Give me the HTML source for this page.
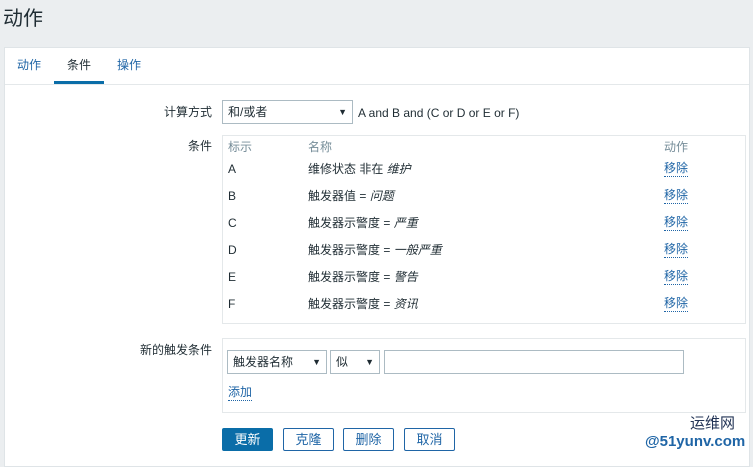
<!DOCTYPE html>
<html><head><meta charset="utf-8"><style>
*{margin:0;padding:0;box-sizing:border-box}
body{width:753px;height:459px;background:#ebeef0;font-family:"Liberation Sans","Noto Sans CJK SC",sans-serif;font-size:12px;color:#1f2c33;position:relative;overflow:hidden}
.a{position:absolute;white-space:nowrap;line-height:16px}
.panel{position:absolute;left:4px;top:47px;width:746px;height:420px;background:#fff;border:1px solid #dfe4e7}
.box{position:absolute;border:1px solid #e4e8ea;background:#fff}
.sel{position:absolute;border:1px solid #acbbc3;background:#fff;height:24px;line-height:22px;padding-left:5px}
.sel:after{content:"▼";position:absolute;right:5px;font-size:9px;top:0}
.lnk{color:#1f65a6;border-bottom:1px dotted #1f65a6;line-height:15px}
.btn{position:absolute;top:428px;height:23px;width:51px;border:1px solid #1f65a6;border-radius:2px;color:#1f65a6;text-align:center;line-height:21px;font-size:13px;background:#fff}
.lab{position:absolute;right:541px;color:#1f2c33}
</style></head><body>
<div class="a" style="left:3px;top:6px;font-size:20px;line-height:26px;color:#1f2c33">动作</div>
<div class="panel"></div>
<div class="a" style="left:17px;top:57px;color:#1f65a6">动作</div>
<div class="a" style="left:67px;top:57px;color:#1f2c33">条件</div>
<div class="a" style="left:117px;top:57px;color:#1f65a6">操作</div>
<div class="a" style="left:54px;top:81px;width:50px;height:3px;background:#0a6da8"></div>
<div class="a" style="left:5px;top:84px;width:744px;height:1px;background:#e4e8ea"></div>
<div class="a lab" style="top:104px">计算方式</div>
<div class="sel" style="left:222px;top:100px;width:131px">和/或者</div>
<div class="a" style="left:358px;top:105px">A and B and (C or D or E or F)</div>
<div class="a lab" style="top:138px">条件</div>
<div class="box" style="left:222px;top:135px;width:524px;height:189px"></div>
<div class="a" style="left:228px;top:139px;color:#768d99">标示</div>
<div class="a" style="left:308px;top:139px;color:#768d99">名称</div>
<div class="a" style="left:664px;top:139px;color:#768d99">动作</div>
<div class="a" style="left:228px;top:161px">A</div><div class="a" style="left:308px;top:161px">维修状态 非在 <i>维护</i></div><div class="a lnk" style="left:664px;top:161px">移除</div>
<div class="a" style="left:228px;top:188px">B</div><div class="a" style="left:308px;top:188px">触发器值 = <i>问题</i></div><div class="a lnk" style="left:664px;top:188px">移除</div>
<div class="a" style="left:228px;top:215px">C</div><div class="a" style="left:308px;top:215px">触发器示警度 = <i>严重</i></div><div class="a lnk" style="left:664px;top:215px">移除</div>
<div class="a" style="left:228px;top:242px">D</div><div class="a" style="left:308px;top:242px">触发器示警度 = <i>一般严重</i></div><div class="a lnk" style="left:664px;top:242px">移除</div>
<div class="a" style="left:228px;top:269px">E</div><div class="a" style="left:308px;top:269px">触发器示警度 = <i>警告</i></div><div class="a lnk" style="left:664px;top:269px">移除</div>
<div class="a" style="left:228px;top:296px">F</div><div class="a" style="left:308px;top:296px">触发器示警度 = <i>资讯</i></div><div class="a lnk" style="left:664px;top:296px">移除</div>
<div class="a lab" style="top:342px">新的触发条件</div>
<div class="box" style="left:222px;top:338px;width:524px;height:75px"></div>
<div class="sel" style="left:227px;top:350px;width:100px">触发器名称</div>
<div class="sel" style="left:330px;top:350px;width:50px">似</div>
<div class="a" style="left:384px;top:350px;width:300px;height:24px;border:1px solid #acbbc3"></div>
<div class="a lnk" style="left:228px;top:385px">添加</div>
<div class="btn" style="left:222px;background:#0a6da8;color:#fff;border-color:#0a6da8">更新</div>
<div class="btn" style="left:283px">克隆</div>
<div class="btn" style="left:343px">删除</div>
<div class="btn" style="left:404px">取消</div>
<div class="a" style="left:690px;top:416px;font-size:15px;color:#235">运维网</div>
<div class="a" style="left:645px;top:434px;font-size:15px;color:#1f65a6;font-weight:bold">@51yunv.com</div>
</body></html>
